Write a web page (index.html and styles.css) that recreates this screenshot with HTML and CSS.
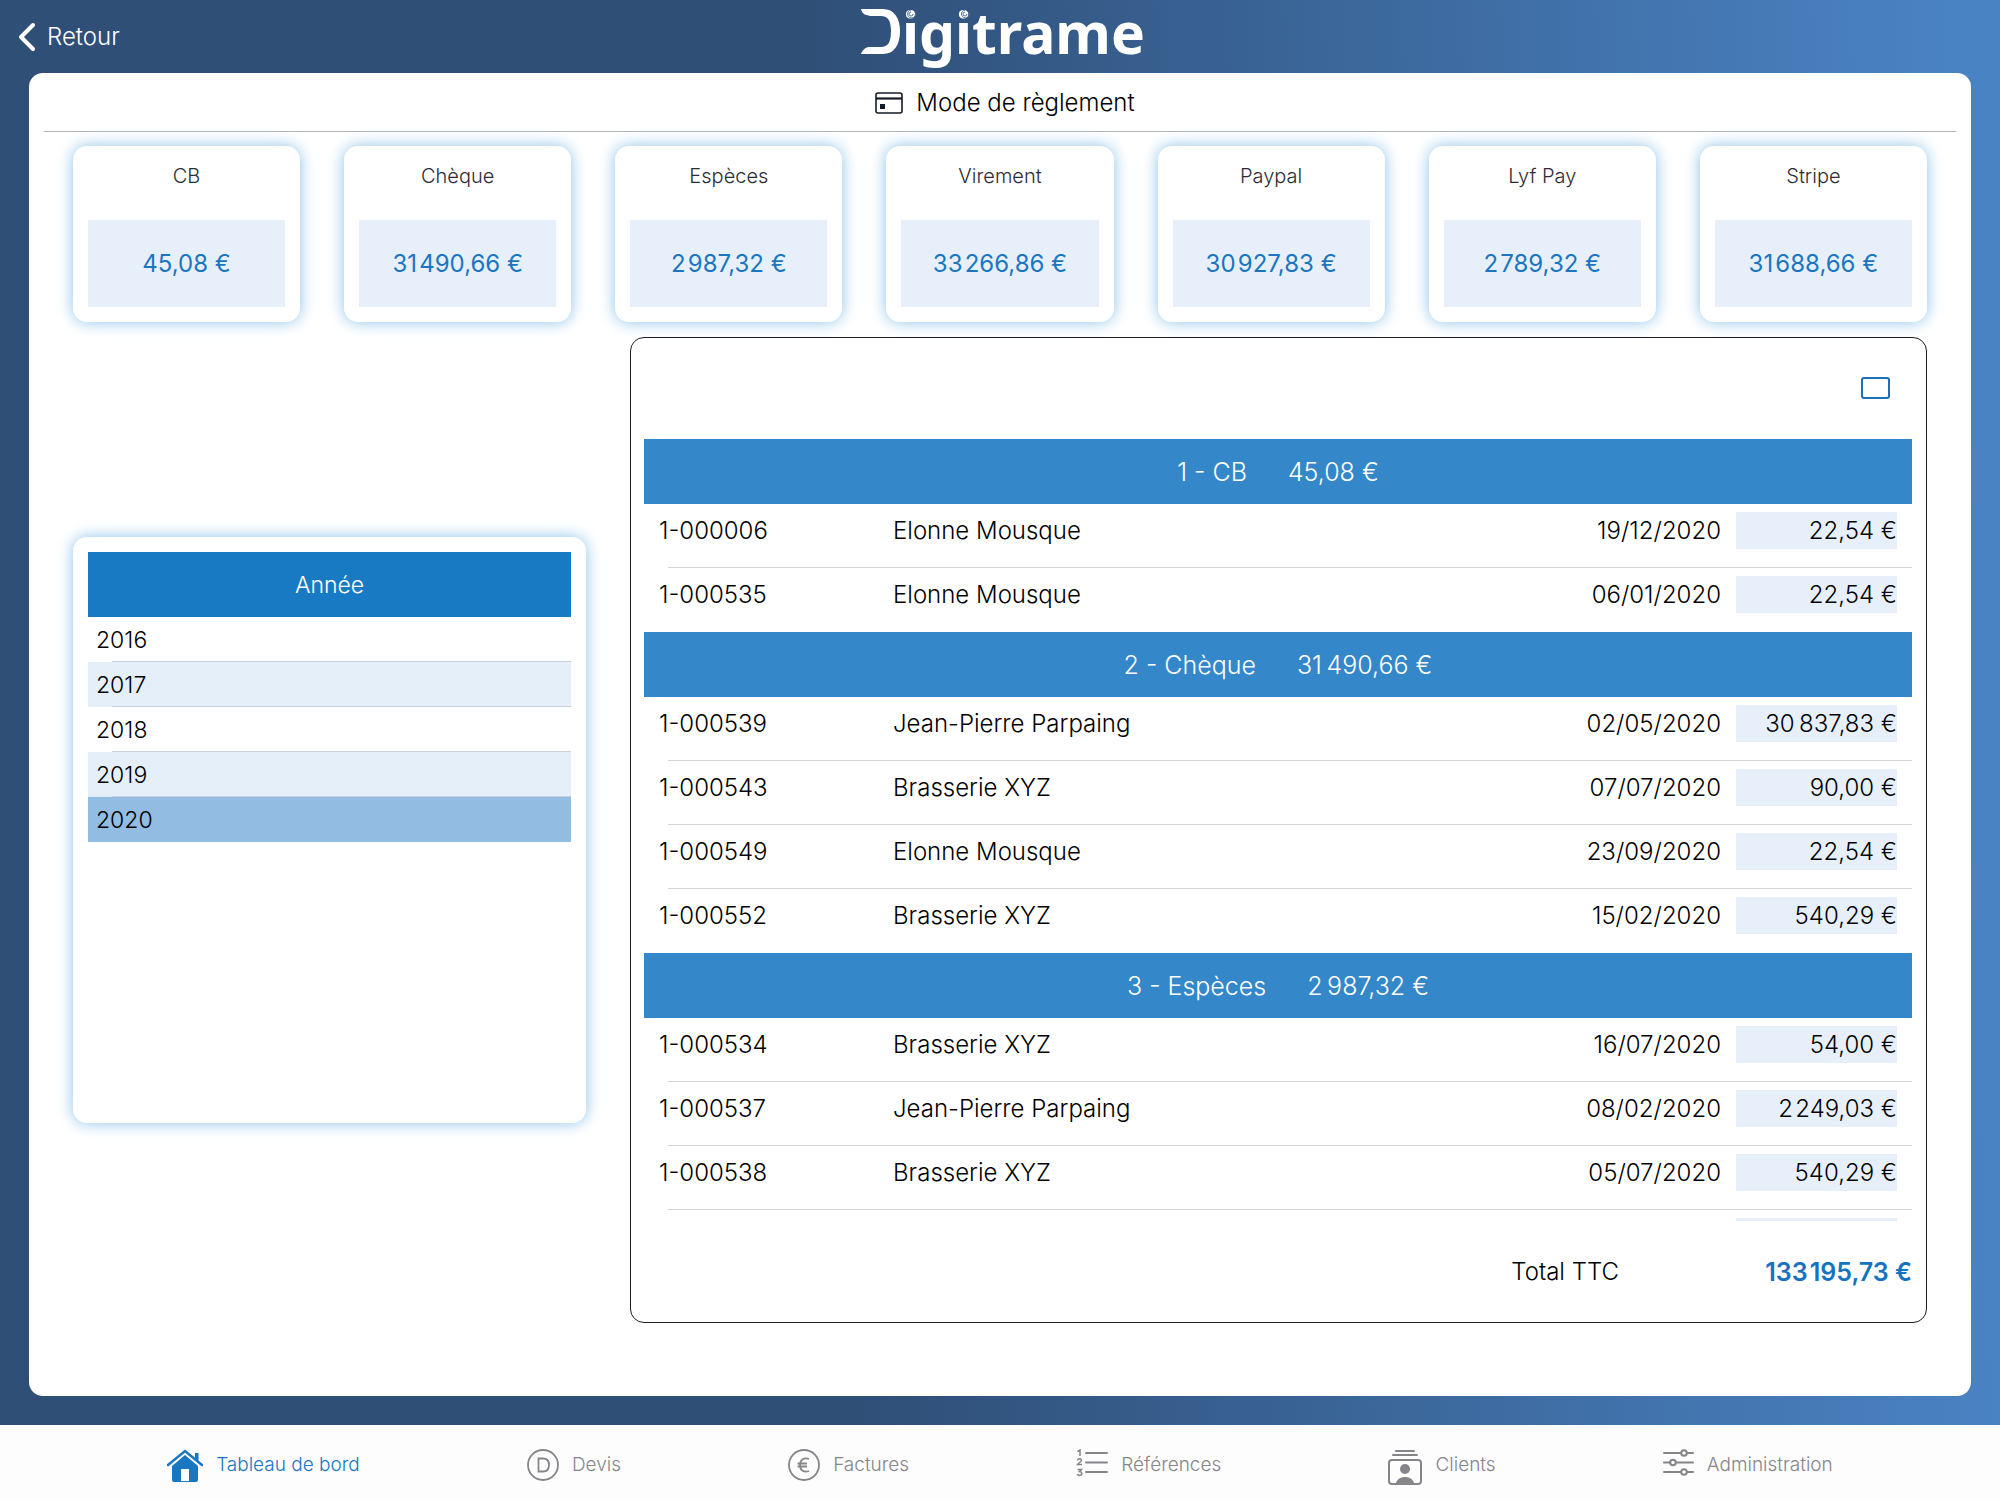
FILE: index.html
```html
<!DOCTYPE html>
<html lang="fr">
<head>
<meta charset="utf-8">
<meta name="viewport" content="width=device-width, initial-scale=1">
<title>Digitrame</title>
<link rel="stylesheet" href="styles.css">
</head>
<body>
<header class="topbar">
  <a class="back" href="#">
    <svg width="18" height="30" viewBox="0 0 18 30" aria-hidden="true"><path d="M15 3 3 15l12 12" fill="none" stroke="#fff" stroke-width="4" stroke-linecap="round" stroke-linejoin="round"/></svg>
    <span>Retour</span>
  </a>
  <svg class="logo" width="290" height="73" viewBox="0 0 290 73" role="img" aria-label="Digitrame">
    <path fill="#fff" d="M6 9h22c11 0 17 9 17 22 0 14-6 23-17 23H6c1-3 4-7 8-7h12c7 0 10-5 10-16 0-10-3-15-10-15H18C11 16 7 14 6 9z"/>
    <text class="logo-text" x="47" y="54">igitrame</text>
    <g fill="none" stroke="#50719c" stroke-width="1">
      <path d="M58 14a2 2 0 1 1-2-2M60 12a4 4 0 1 1-4-2"/>
      <path d="M112 14a2 2 0 1 1-2-2M114 12a4 4 0 1 1-4-2"/>
    </g>
  </svg>
</header>

<main class="panel">
  <h1 class="panel-title">
    <svg width="28" height="22" viewBox="0 0 28 22" aria-hidden="true"><rect x="1" y="1" width="26" height="20" rx="2" fill="none" stroke="#161b28" stroke-width="1.600"/><path d="M1 6.500h26" stroke="#161b28" stroke-width="2.200"/><path d="M5 12h5v5H5z" fill="#161b28"/></svg>
    <span>Mode de règlement</span>
  </h1>

  <section class="cards">
    <article class="card"><h2>CB</h2><p>45,08 €</p></article>
    <article class="card"><h2>Chèque</h2><p>31&#8202;490,66 €</p></article>
    <article class="card"><h2>Espèces</h2><p>2&#8202;987,32 €</p></article>
    <article class="card"><h2>Virement</h2><p>33&#8202;266,86 €</p></article>
    <article class="card"><h2>Paypal</h2><p>30&#8202;927,83 €</p></article>
    <article class="card"><h2>Lyf Pay</h2><p>2&#8202;789,32 €</p></article>
    <article class="card"><h2>Stripe</h2><p>31&#8202;688,66 €</p></article>
  </section>

  <div class="content">
    <section class="years">
      <table>
        <thead><tr><th scope="col">Année</th></tr></thead>
        <tbody>
          <tr><td>2016</td></tr>
          <tr><td>2017</td></tr>
          <tr><td>2018</td></tr>
          <tr><td>2019</td></tr>
          <tr class="selected"><td>2020</td></tr>
        </tbody>
      </table>
    </section>

    <section class="payments">
      <div class="payments-bar"><button class="frame-button" type="button" aria-label="Afficher"></button></div>
      <div class="payments-scroll">
        <table>
          <colgroup><col class="col-id"><col><col class="col-date"><col class="col-amount"></colgroup>
          <tbody>
            <tr class="group"><th colspan="4"><span>1 - CB</span><span>45,08 €</span></th></tr>
            <tr><td>1-000006</td><td>Elonne Mousque</td><td>19/12/2020</td><td><span class="amount">22,54 €</span></td></tr>
            <tr><td>1-000535</td><td>Elonne Mousque</td><td>06/01/2020</td><td><span class="amount">22,54 €</span></td></tr>
          </tbody>
          <tbody>
            <tr class="group"><th colspan="4"><span>2 - Chèque</span><span>31&#8201;490,66 €</span></th></tr>
            <tr><td>1-000539</td><td>Jean-Pierre Parpaing</td><td>02/05/2020</td><td><span class="amount">30&#8201;837,83 €</span></td></tr>
            <tr><td>1-000543</td><td>Brasserie XYZ</td><td>07/07/2020</td><td><span class="amount">90,00 €</span></td></tr>
            <tr><td>1-000549</td><td>Elonne Mousque</td><td>23/09/2020</td><td><span class="amount">22,54 €</span></td></tr>
            <tr><td>1-000552</td><td>Brasserie XYZ</td><td>15/02/2020</td><td><span class="amount">540,29 €</span></td></tr>
          </tbody>
          <tbody class="open">
            <tr class="group"><th colspan="4"><span>3 - Espèces</span><span>2&#8201;987,32 €</span></th></tr>
            <tr><td>1-000534</td><td>Brasserie XYZ</td><td>16/07/2020</td><td><span class="amount">54,00 €</span></td></tr>
            <tr><td>1-000537</td><td>Jean-Pierre Parpaing</td><td>08/02/2020</td><td><span class="amount">2&#8202;249,03 €</span></td></tr>
            <tr><td>1-000538</td><td>Brasserie XYZ</td><td>05/07/2020</td><td><span class="amount">540,29 €</span></td></tr>
            <tr><td></td><td></td><td></td><td><span class="amount"></span></td></tr>
          </tbody>
        </table>
      </div>
      <div class="total"><span>Total TTC</span><strong>133&#8202;195,73 €</strong></div>
    </section>
  </div>
</main>

<nav class="tabs">
  <a class="tab active" href="#">
    <svg width="36" height="34" viewBox="0 0 36 34" aria-hidden="true" fill="currentColor"><path d="M18 6 31 17v14a2 2 0 0 1-2 2H7a2 2 0 0 1-2-2V17zM14 20v12h8V20z" fill-rule="evenodd"/><path d="M1 16 18 2l17 14" fill="none" stroke="#fdfdfe" stroke-width="5"/><path d="M1 16 18 2l17 14" fill="none" stroke="currentColor" stroke-width="2.500" stroke-linecap="round"/><path d="M28 4h3.500v8L28 9z"/></svg>
    <span>Tableau de bord</span>
  </a>
  <a class="tab" href="#">
    <svg width="32" height="32" viewBox="0 0 32 32" aria-hidden="true" fill="none" stroke="currentColor" stroke-width="1.800"><circle cx="16" cy="16" r="15"/><path d="M11.500 9.500v13H16c4 0 6-2.500 6-6.500s-2-6.500-6-6.500z"/></svg>
    <span>Devis</span>
  </a>
  <a class="tab" href="#">
    <svg width="32" height="32" viewBox="0 0 32 32" aria-hidden="true" fill="none" stroke="currentColor" stroke-width="1.800"><circle cx="16" cy="16" r="15"/><path d="M21 10c-5-2-9 .5-9 6s4 8 9 6M9.500 14.500H19M9.500 17.500H19"/></svg>
    <span>Factures</span>
  </a>
  <a class="tab" href="#">
    <svg width="32" height="32" viewBox="0 0 32 32" aria-hidden="true" fill="none" stroke="currentColor"><path d="M10 4h21M10 13.500h21M10 23h21" stroke-width="2" stroke-linecap="round"/><path d="M1.500 2.500 4 1v6M1.500 11.500c0-2.500 4-2.500 4 0 0 1-3 2.500-4 4h4.500M1.500 20.500h4l-2 2c3 0 3 4 0 4l-2.500-1" stroke-width="1.500"/></svg>
    <span>Références</span>
  </a>
  <a class="tab" href="#">
    <svg width="34" height="36" viewBox="0 0 34 36" aria-hidden="true" fill="none" stroke="currentColor" stroke-width="2" stroke-linecap="round"><path d="M8 2h18M5 6h24"/><rect x="1" y="11" width="32" height="24" rx="3"/><circle cx="17" cy="20" r="5" fill="currentColor" stroke="none"/><path d="M8 34c2-8 16-8 18 0z" fill="currentColor" stroke="none"/></svg>
    <span>Clients</span>
  </a>
  <a class="tab" href="#">
    <svg width="31" height="32" viewBox="0 0 31 32" aria-hidden="true" fill="none" stroke="currentColor" stroke-width="2" stroke-linecap="round"><path d="M1 4h17M24 4h6M1 13.500h6M13 13.500h17M1 23h17M24 23h6"/><circle cx="21" cy="4" r="2.800"/><circle cx="10" cy="13.500" r="2.800"/><circle cx="21" cy="23" r="2.800"/></svg>
    <span>Administration</span>
  </a>
</nav>
</body>
</html>
```

FILE: styles.css
```css
* {
  box-sizing: border-box;
}

body {
  margin: 0;
  min-height: 100vh;
  display: flex;
  flex-direction: column;
  font-family: Inter, "Liberation Sans", sans-serif;
  font-size: 24px;
  font-weight: 300;
  line-height: 32px;
  color: #000;
  background: linear-gradient(88deg, #2f4f77 42%, #4a83c4 98%);
}

h1,
h2,
p {
  margin: 0;
  font-weight: 300;
}

table {
  width: 100%;
  border-collapse: collapse;
  table-layout: fixed;
}

td,
th {
  padding: 0;
  font-weight: 300;
  text-align: left;
}

.topbar {
  display: grid;
  grid-template-columns: 1fr auto 1fr;
  align-items: center;
  height: 73px;
  padding: 0 18px;
}

.back {
  display: flex;
  align-items: center;
  gap: 11px;
  color: #fff;
  text-decoration: none;
}

.logo {
  overflow: visible;
}

.logo-text {
  font-family: "Noto Sans", sans-serif;
  font-weight: 700;
  font-size: 57px;
  fill: #fff;
}

.panel {
  flex: 1;
  margin: 0 29px 29px;
  border-radius: 14px;
  background: #fff;
}

.panel-title {
  display: flex;
  justify-content: center;
  align-items: center;
  gap: 13px;
  height: 59px;
  margin: 0 15px;
  padding: 2px 0 0 10px;
  border-bottom: 1px solid #b4b6bd;
  font-size: 24px;
}

.cards {
  display: grid;
  grid-template-columns: repeat(7, 1fr);
  gap: 44px;
  padding: 14px 44px 15px;
}

.card,
.years {
  padding: 15px;
  border-radius: 14px;
  background: #fff;
  box-shadow: 0 0 16px #8cc2e9;
}

.card h2 {
  margin-bottom: 29px;
  font-size: 20px;
  line-height: 30px;
  color: #2b2d33;
  text-align: center;
}

.card p {
  padding: 28px 0;
  font-weight: 400;
  line-height: 31px;
  color: #1b76c0;
  background: #e7f0fa;
  text-align: center;
}

.content {
  display: grid;
  grid-template-columns: 513fr 1297fr;
  gap: 44px;
  align-items: center;
  padding: 0 44px;
}

.years {
  min-height: 586px;
  font-size: 23px;
}

.years th {
  height: 65px;
  color: #fff;
  background: #187ac3;
  text-align: center;
}

.years td {
  height: 45px;
  padding-left: 8px;
}

.years tbody tr {
  background: linear-gradient(#c8cfdb, #c8cfdb) 24px 100% / 100% 1px no-repeat;
}

.years tbody tr:nth-child(even) {
  background-color: #e5effa;
}

.years tbody tr.selected {
  background: #92bce2;
}

.payments {
  padding: 0 14px 0 13px;
  border: 1px solid #1c1d22;
  border-radius: 14px;
}

.payments-bar {
  display: flex;
  justify-content: flex-end;
  align-items: center;
  height: 101px;
  padding: 0 22px 2px 0;
}

.frame-button {
  width: 29px;
  height: 22px;
  padding: 0;
  border: 2px solid #1b6fbd;
  border-radius: 3px;
  background: #fff;
}

.payments-scroll {
  max-height: 782px;
  overflow: hidden;
}

.col-id {
  width: 249px;
}

.col-date {
  width: 220px;
}

.col-amount {
  width: 176px;
}

.payments td {
  height: 64px;
  padding-top: 8px;
  vertical-align: top;
  line-height: 37px;
}

.payments td:first-child {
  padding-left: 15px;
}

.payments td:nth-child(3) {
  padding-right: 15px;
  text-align: right;
}

.payments td:last-child {
  padding-right: 15px;
}

.payments tr {
  background: linear-gradient(#d3d5d9, #d3d5d9) 24px 100% / 100% 1px no-repeat;
}

.payments tbody:not(.open) tr:last-child {
  background: none;
}

.payments .group {
  background: #3487c9;
}

.group th {
  height: 65px;
  font-size: 25px;
  color: #fff;
  text-align: center;
}

.group span + span {
  margin-left: 41px;
}

.amount {
  display: block;
  height: 37px;
  background: #e7f0fa;
  text-align: right;
}

.total {
  display: flex;
  justify-content: flex-end;
  align-items: center;
  height: 101px;
}

.total strong {
  width: 293px;
  font-size: 25px;
  font-weight: 600;
  color: #1573c2;
  text-align: right;
}

.tabs {
  display: flex;
  justify-content: space-evenly;
  height: 74px;
  padding-top: 24px;
  background: #fdfdfe;
  font-size: 19px;
}

.tab {
  display: flex;
  align-items: flex-start;
  gap: 13px;
  color: #85858a;
  text-decoration: none;
}

.tab.active {
  color: #1b76c0;
}
```
